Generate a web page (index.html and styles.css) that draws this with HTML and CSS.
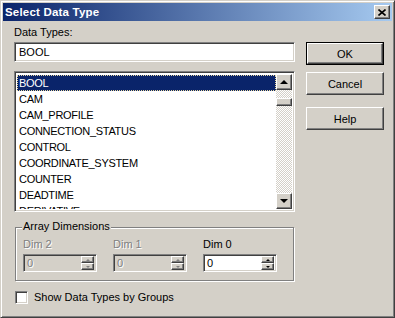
FILE: index.html
```html
<!DOCTYPE html>
<html lang="en">
<head>
    <meta charset="UTF-8">
    <title>Select Data Type</title>
    <link rel="stylesheet" href="styles.css">
</head>
<body>
    <div class="window">
        <div class="titlebar">
            <span class="title">Select Data Type</span>
            <button class="close-btn">
                <svg width="8" height="7" viewBox="0 0 8 7">
                    <path d="M0.5 0.5 L7.5 6.5 M7.5 0.5 L0.5 6.5" stroke="#000" stroke-width="1.6" fill="none"/>
                </svg>
            </button>
        </div>

        <div class="client">
            <div class="left-col">
                <div class="label">Data Types:</div>
                <div class="textbox sunken">BOOL</div>

                <div class="listbox sunken">
                    <div class="list-items">
                        <div class="list-item selected">BOOL</div>
                        <div class="list-item">CAM</div>
                        <div class="list-item">CAM_PROFILE</div>
                        <div class="list-item">CONNECTION_STATUS</div>
                        <div class="list-item">CONTROL</div>
                        <div class="list-item">COORDINATE_SYSTEM</div>
                        <div class="list-item">COUNTER</div>
                        <div class="list-item">DEADTIME</div>
                        <div class="list-item">DERIVATIVE</div>
                    </div>
                    <div class="scrollbar">
                        <div class="sb-btn raised"><span class="arrow-up"></span></div>
                        <div class="sb-track">
                            <div class="sb-thumb raised"></div>
                        </div>
                        <div class="sb-btn raised"><span class="arrow-down"></span></div>
                    </div>
                </div>

                <div class="group">
                    <span class="group-legend">Array Dimensions</span>
                    <div class="dims">
                        <div class="dim disabled">
                            <div class="label">Dim 2</div>
                            <div class="spin sunken">
                                <span class="spin-value">0</span>
                                <div class="spin-btns">
                                    <div class="spin-btn raised"><span class="mini-up"></span></div>
                                    <div class="spin-btn raised"><span class="mini-down"></span></div>
                                </div>
                            </div>
                        </div>
                        <div class="dim disabled">
                            <div class="label">Dim 1</div>
                            <div class="spin sunken">
                                <span class="spin-value">0</span>
                                <div class="spin-btns">
                                    <div class="spin-btn raised"><span class="mini-up"></span></div>
                                    <div class="spin-btn raised"><span class="mini-down"></span></div>
                                </div>
                            </div>
                        </div>
                        <div class="dim">
                            <div class="label">Dim 0</div>
                            <div class="spin sunken">
                                <span class="spin-value">0</span>
                                <div class="spin-btns">
                                    <div class="spin-btn raised"><span class="mini-up"></span></div>
                                    <div class="spin-btn raised"><span class="mini-down"></span></div>
                                </div>
                            </div>
                        </div>
                    </div>
                </div>

                <div class="check-row">
                    <span class="checkbox sunken"></span>
                    <span>Show Data Types by Groups</span>
                </div>
            </div>

            <div class="right-col">
                <div class="default-frame"><button class="btn raised">OK</button></div>
                <button class="btn raised btn-cancel">Cancel</button>
                <button class="btn raised btn-help">Help</button>
            </div>
        </div>
    </div>
</body>
</html>
```

FILE: styles.css
```css
body {
    margin: 0;
    background: #d4d0c8;
    font-family: "Liberation Sans", Arial, sans-serif;
    font-size: 11px;
    color: #000;
}
.window {
    box-sizing: border-box;
    width: 395px;
    height: 318px;
    padding: 2px;
    background: #d4d0c8;
    border: 1px solid;
    border-color: #d4d0c8 #404040 #404040 #d4d0c8;
    box-shadow: inset 1px 1px #fff, inset -1px -1px #808080;
}
.raised {
    box-sizing: border-box;
    background: #d4d0c8;
    border: 1px solid;
    border-color: #fff #404040 #404040 #fff;
    box-shadow: inset -1px -1px #808080, inset 1px 1px #d4d0c8;
}
.sunken {
    box-sizing: border-box;
    border: 1px solid;
    border-color: #808080 #fff #fff #808080;
    box-shadow: inset 1px 1px #404040, inset -1px -1px #d4d0c8;
}

/* title bar */
.titlebar {
    height: 18px;
    display: flex;
    align-items: center;
    justify-content: space-between;
    padding: 0 2px;
    background: linear-gradient(to right, #0a246a, #a6caf0);
    color: #fff;
}
.title {
    font-weight: bold;
    font-size: 11.5px;
    letter-spacing: 0.2px;
}
.close-btn {
    width: 16px;
    height: 14px;
    padding: 0;
    display: flex;
    align-items: center;
    justify-content: center;
    background: #d4d0c8;
    border: 1px solid;
    border-color: #fff #404040 #404040 #fff;
    box-shadow: inset -1px -1px #808080;
}

/* client area */
.client {
    display: flex;
    padding: 5px 0 0 11px;
}
.left-col {
    width: 281px;
}
.label {
    line-height: 13px;
    margin-bottom: 3px;
}
.textbox {
    height: 20px;
    background: #fff;
    padding: 3px 0 0 4px;
    margin-bottom: 9px;
    line-height: 13px;
}

/* list box */
.listbox {
    height: 141px;
    background: #fff;
    display: flex;
    padding: 2px;
}
.list-items {
    flex: 1;
    overflow: hidden;
    padding-top: 1px;
}
.list-item {
    height: 16px;
    line-height: 16px;
    padding-left: 2px;
    white-space: nowrap;
    letter-spacing: -0.3px;
}
.list-item.selected {
    background: #0a246a;
    color: #fff;
    outline: 1px dotted #e8d8a0;
    outline-offset: -1px;
}
.scrollbar {
    width: 16px;
    display: flex;
    flex-direction: column;
}
.sb-btn {
    height: 16px;
    display: flex;
    align-items: center;
    justify-content: center;
}
.sb-track {
    flex: 1;
    padding-top: 8px;
    background-color: #fff;
    background-image: repeating-conic-gradient(#d4d0c8 0 25%, #fff 0 50%);
    background-size: 2px 2px;
}
.sb-thumb {
    height: 8px;
}
.arrow-up {
    width: 0;
    height: 0;
    border-left: 4px solid transparent;
    border-right: 4px solid transparent;
    border-bottom: 4px solid #000;
}
.arrow-down {
    width: 0;
    height: 0;
    border-left: 4px solid transparent;
    border-right: 4px solid transparent;
    border-top: 4px solid #000;
}

/* array dimensions group (etched frame) */
.group {
    position: relative;
    box-sizing: border-box;
    width: 279px;
    height: 54px;
    margin: 15px 0 0 1px;
    padding: 10px 0 0 7px;
    border: 1px solid #808080;
    box-shadow: inset 1px 1px #fff, 1px 1px #fff;
}
.group-legend {
    position: absolute;
    top: -8px;
    left: 6px;
    padding: 0 1px;
    background: #d4d0c8;
    line-height: 13px;
}
.dims {
    display: flex;
    gap: 16px;
}
.dim {
    width: 74px;
}
.spin {
    height: 18px;
    background: #fff;
    display: flex;
    align-items: center;
    justify-content: space-between;
    padding: 2px 2px 2px 3px;
}
.spin-value {
    line-height: 13px;
}
.spin-btns {
    width: 13px;
    height: 14px;
    display: flex;
    flex-direction: column;
}
.spin-btn {
    height: 7px;
    display: flex;
    align-items: center;
    justify-content: center;
}
.mini-up {
    width: 0;
    height: 0;
    border-left: 2px solid transparent;
    border-right: 2px solid transparent;
    border-bottom: 2px solid #000;
}
.mini-down {
    width: 0;
    height: 0;
    border-left: 2px solid transparent;
    border-right: 2px solid transparent;
    border-top: 2px solid #000;
}
.dim.disabled .label,
.dim.disabled .spin-value {
    color: #808080;
    text-shadow: 1px 1px #fff;
}
.dim.disabled .spin {
    background: #d4d0c8;
}
.dim.disabled .mini-up {
    border-bottom-color: #808080;
}
.dim.disabled .mini-down {
    border-top-color: #808080;
}

/* checkbox */
.check-row {
    display: flex;
    align-items: center;
    gap: 6px;
    margin: 10px 0 0 1px;
    line-height: 13px;
}
.checkbox {
    width: 13px;
    height: 13px;
    background: #fff;
}

/* buttons */
.right-col {
    margin: 16px 0 0 11px;
    display: flex;
    flex-direction: column;
    width: 78px;
}
.default-frame {
    border: 1px solid #000;
    height: 23px;
    box-sizing: border-box;
}
.default-frame .btn {
    width: 100%;
    height: 100%;
}
.btn {
    width: 78px;
    height: 23px;
    padding: 0;
    font-family: "Liberation Sans", Arial, sans-serif;
    font-size: 11px;
    color: #000;
}
.btn-cancel {
    margin-top: 7px;
}
.btn-help {
    margin-top: 12px;
}
```
